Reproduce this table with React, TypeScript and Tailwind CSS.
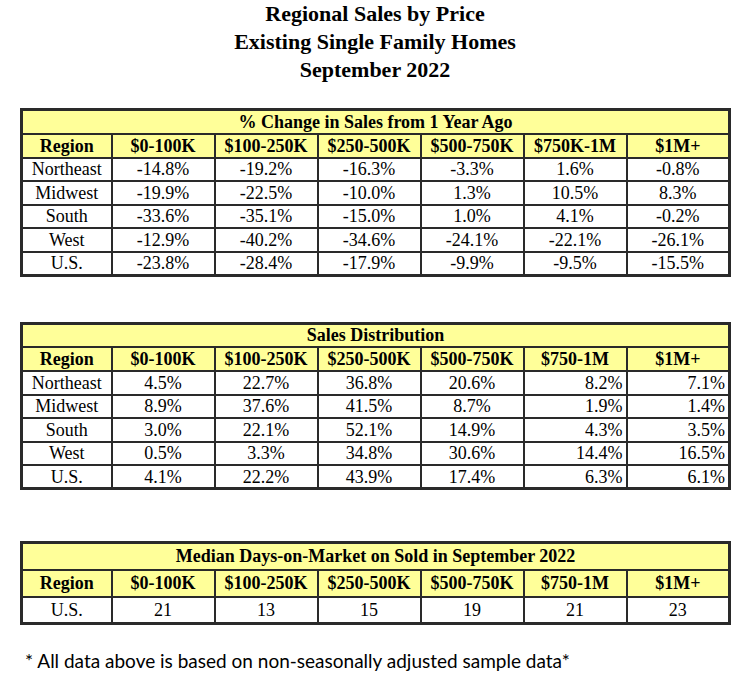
const cols = ["Region", "$0-100K", "$100-250K", "$250-500K", "$500-750K", "$750K-1M", "$1M+"];
const cols2 = ["Region", "$0-100K", "$100-250K", "$250-500K", "$500-750K", "$750-1M", "$1M+"];

const changeRows = [
  ["Northeast", "-14.8%", "-19.2%", "-16.3%", "-3.3%", "1.6%", "-0.8%"],
  ["Midwest", "-19.9%", "-22.5%", "-10.0%", "1.3%", "10.5%", "8.3%"],
  ["South", "-33.6%", "-35.1%", "-15.0%", "1.0%", "4.1%", "-0.2%"],
  ["West", "-12.9%", "-40.2%", "-34.6%", "-24.1%", "-22.1%", "-26.1%"],
  ["U.S.", "-23.8%", "-28.4%", "-17.9%", "-9.9%", "-9.5%", "-15.5%"]
];

const distRows = [
  ["Northeast", "4.5%", "22.7%", "36.8%", "20.6%", "8.2%", "7.1%"],
  ["Midwest", "8.9%", "37.6%", "41.5%", "8.7%", "1.9%", "1.4%"],
  ["South", "3.0%", "22.1%", "52.1%", "14.9%", "4.3%", "3.5%"],
  ["West", "0.5%", "3.3%", "34.8%", "30.6%", "14.4%", "16.5%"],
  ["U.S.", "4.1%", "22.2%", "43.9%", "17.4%", "6.3%", "6.1%"]
];

const domRows = [["U.S.", "21", "13", "15", "19", "21", "23"]];

function SalesTable({
  title,
  headers,
  rows,
  rightFrom,
  tall
}: {
  title: string;
  headers: string[];
  rows: string[][];
  rightFrom?: number;
  tall?: boolean;
}) {
  const rowH = tall ? "h-[27px]" : "h-[24px]";
  return (
    <table className="w-[709px] table-fixed border-collapse border-[3px] border-[#2a2a2a] text-[18px] leading-none text-black">
      <colgroup>
        <col className="w-[90px]" />
        {headers.slice(1).map((h) => (
          <col key={h} className="w-[103px]" />
        ))}
      </colgroup>
      <thead>
        <tr className={rowH}>
          <th colSpan={7} className="border-2 border-[#2a2a2a] bg-[#ffff99] p-0 text-center font-bold">
            {title}
          </th>
        </tr>
        <tr className={rowH}>
          {headers.map((h) => (
            <th key={h} className="border-2 border-[#2a2a2a] bg-[#ffff99] p-0 text-center font-bold">
              {h}
            </th>
          ))}
        </tr>
      </thead>
      <tbody>
        {rows.map((r) => (
          <tr key={r[0]} className={tall ? "h-[27px]" : "h-[23.5px]"}>
            {r.map((v, i) => (
              <td
                key={i}
                className={
                  rightFrom !== undefined && i >= rightFrom
                    ? "border-2 border-[#2a2a2a] bg-white p-0 pr-[3px] text-right"
                    : "border-2 border-[#2a2a2a] bg-white p-0 text-center"
                }
              >
                {v}
              </td>
            ))}
          </tr>
        ))}
      </tbody>
    </table>
  );
}

export default function App() {
  return (
    <div className="h-[684px] w-[750px] bg-white font-['Liberation_Serif',serif]">
      <div className="text-center text-[22px] font-bold leading-[28px] text-black">
        <p>Regional Sales by Price</p>
        <p>Existing Single Family Homes</p>
        <p>September 2022</p>
      </div>

      <div className="mt-[24px] pl-[20px]">
        <SalesTable title="% Change in Sales from 1 Year Ago" headers={cols} rows={changeRows} />
      </div>

      <div className="mt-[45px] pl-[20px]">
        <SalesTable title="Sales Distribution" headers={cols2} rows={distRows} rightFrom={5} />
      </div>

      <div className="mt-[51px] pl-[20px]">
        <SalesTable title="Median Days-on-Market on Sold in September 2022" headers={cols2} rows={domRows} tall />
      </div>

      <p className="mt-[26px] pl-[25px] font-['Lato',sans-serif] text-[19px] leading-none text-black">
        * All data above is based on non-seasonally adjusted sample data*
      </p>
    </div>
  );
}
